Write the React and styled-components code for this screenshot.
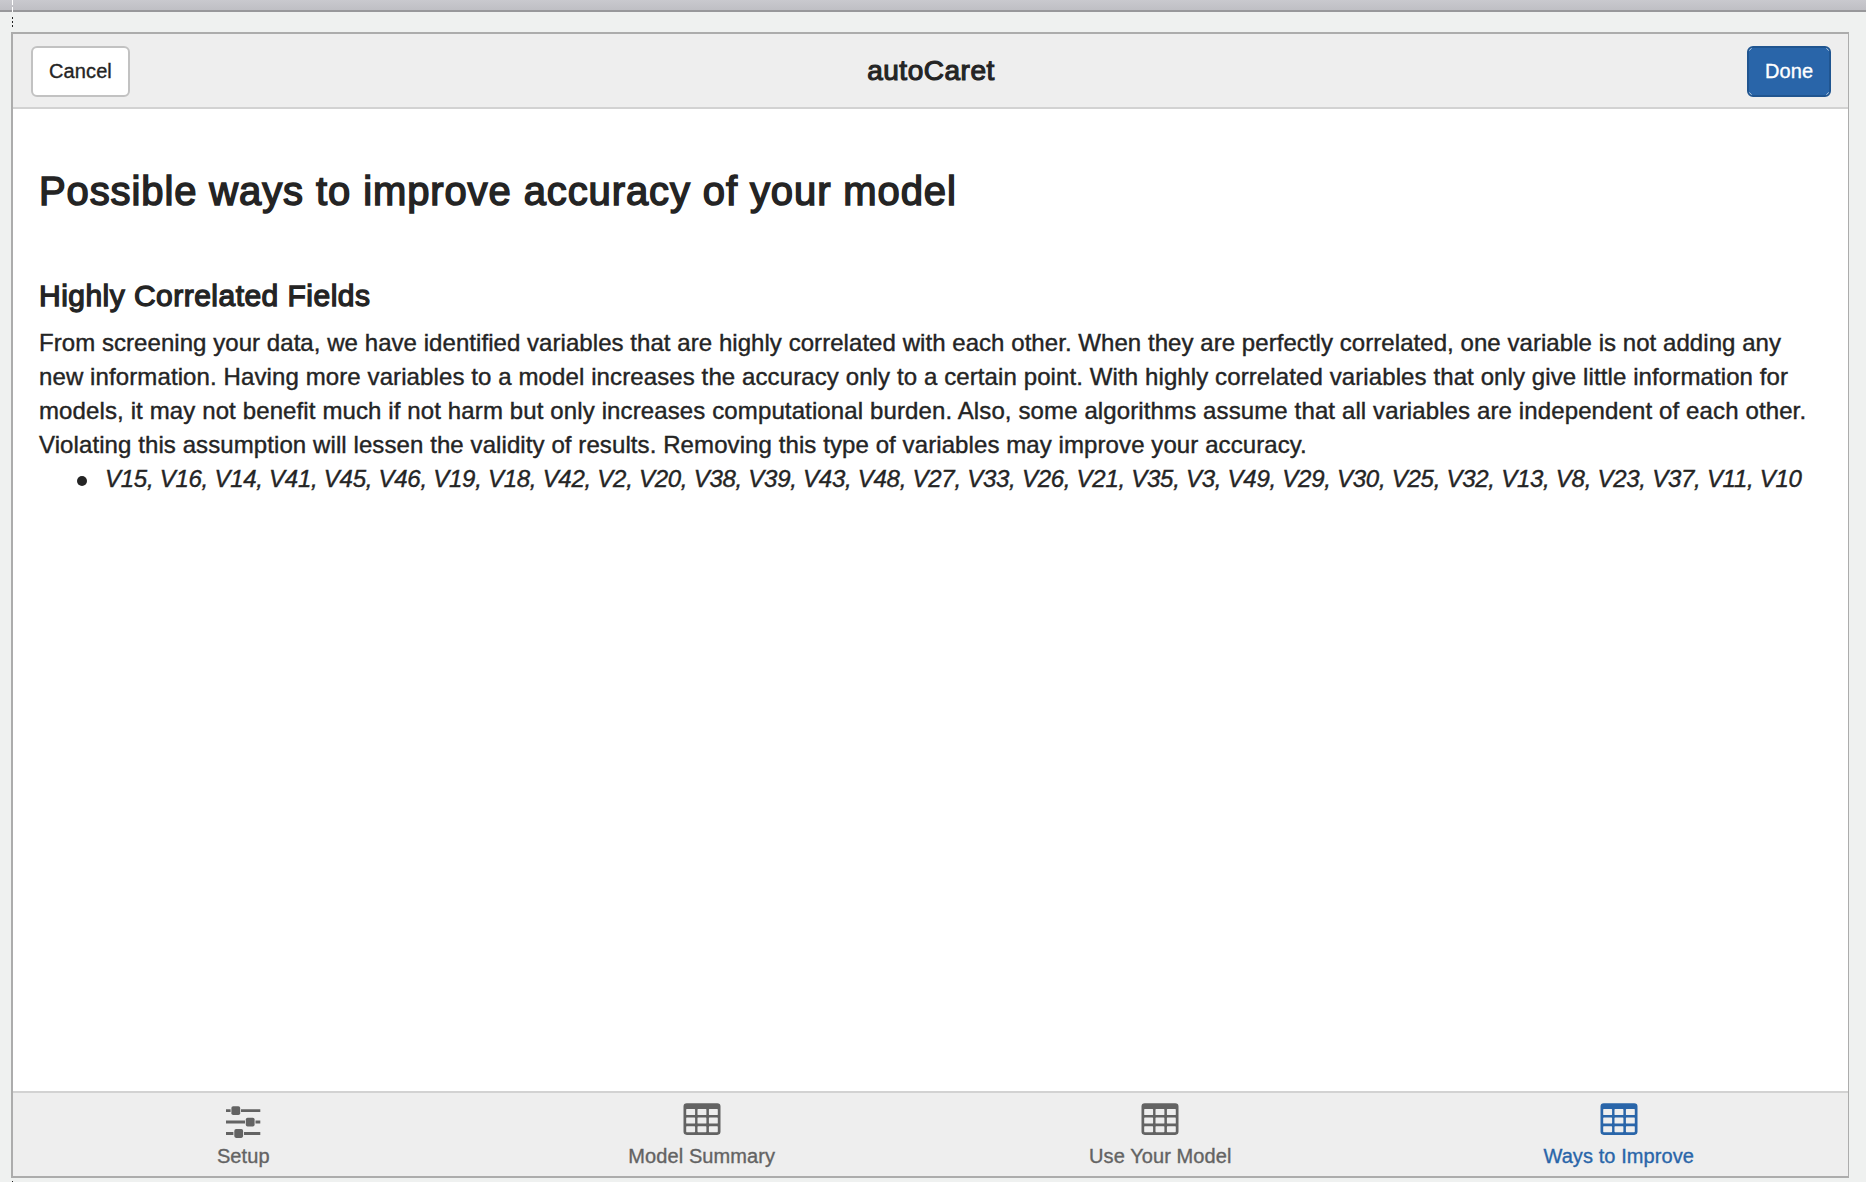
import React from "react";
import styled, { createGlobalStyle, css } from "styled-components";

const GlobalStyle = createGlobalStyle`
  * { box-sizing: border-box; }
  body {
    margin: 0;
    background: #eff1f0;
    color: #242424;
    font-family: "Liberation Sans", Arial, sans-serif;
  }
`;

const Page = styled.div`
  position: relative;
  display: flex;
  flex-direction: column;
  height: 1182px;
  overflow: hidden;
`;

const TitleStrip = styled.div`
  flex: none;
  height: 12px;
  background: linear-gradient(#c9c9ce, #bfbfc4);
  border-bottom: 2px solid #98989b;
`;

const Dashes = styled.i`
  position: absolute;
  left: 12px;
  top: ${(p) => p.$top}px;
  width: 1px;
  height: ${(p) => p.$height}px;
  background: repeating-linear-gradient(
    ${(p) => p.$color} 0 ${(p) => p.$dash}px,
    transparent ${(p) => p.$dash}px ${(p) => p.$period}px
  );
`;

const Window = styled.main`
  flex: none;
  display: flex;
  flex-direction: column;
  width: 1838px;
  height: 1146px;
  margin: 20px 0 0 11px;
  padding-left: 1px;
  background: #fff;
  border: 2px solid #acacac;
  border-right-width: 1px;
`;

const Header = styled.header`
  flex: none;
  display: grid;
  grid-template-columns: 1fr auto 1fr;
  align-items: center;
  height: 75px;
  margin-left: -1px;
  padding: 1px 17px 0 18px;
  background: #eee;
  border-bottom: 2px solid #d2d2d2;
`;

const Title = styled.h3`
  margin: 0 0 1px;
  font-size: 28px;
  line-height: 40px;
  font-weight: 400;
  letter-spacing: 0.52px;
  -webkit-text-stroke: 1.15px;
`;

const primaryButton = css`
  justify-self: end;
  width: 84px;
  color: #fff;
  border-color: #205590;
  background:
    linear-gradient(135deg, #9dbbdb 2.4px, transparent 2.8px),
    linear-gradient(225deg, #9dbbdb 2.4px, transparent 2.8px),
    linear-gradient(45deg, #9dbbdb 2.4px, transparent 2.8px),
    linear-gradient(315deg, #9dbbdb 2.4px, #2965a9 2.8px);
`;

const Button = styled.button`
  justify-self: start;
  width: 99px;
  height: 51px;
  padding: 0 0 1px;
  border: 2px solid #c2c2c2;
  border-radius: 6px;
  background: #fff;
  color: #242424;
  font: 400 20px/28px "Liberation Sans", Arial, sans-serif;
  letter-spacing: 0.1px;
  -webkit-text-stroke: 0.35px;
  ${(p) => p.$primary && primaryButton}
`;

const Content = styled.section`
  flex: 1;
  padding: 0 24px 0 25px;
`;

const Heading = styled.h1`
  margin: 60px 0 0;
  font-size: 40px;
  line-height: 44px;
  font-weight: 400;
  letter-spacing: 0.89px;
  -webkit-text-stroke: 1.5px;
`;

const Subheading = styled.h2`
  margin: 66px 0 0;
  font-size: 30px;
  line-height: 34px;
  font-weight: 400;
  letter-spacing: 0.47px;
  -webkit-text-stroke: 1.3px;
`;

const Paragraph = styled.p`
  margin: 13px 0 0;
`;

const Line = styled.span`
  display: block;
  font-size: 24px;
  line-height: 34px;
  white-space: nowrap;
  letter-spacing: ${(p) => p.$tracking}px;
  -webkit-text-stroke: 0.4px;
`;

const List = styled.ul`
  margin: 0;
  padding: 0 0 0 38px;
  list-style: none;
`;

const Item = styled.li`
  display: flex;
  align-items: center;
  gap: 18px;
  font-style: italic;

  &::before {
    content: "";
    width: 10px;
    height: 10px;
    margin-top: 4px;
    border-radius: 50%;
    background: #242424;
  }
`;

const TabBar = styled.nav`
  flex: none;
  display: grid;
  grid-template-columns: repeat(4, 1fr);
  height: 85px;
  margin-left: -1px;
  padding-left: 1px;
  background: #eee;
  border-top: 2px solid #d2d2d2;
`;

const Tab = styled.a`
  display: flex;
  flex-direction: column;
  align-items: center;
  padding-top: 10px;
  color: ${(p) => (p.$active ? "#2965a9" : "#636363")};
`;

const TabIcon = styled.svg`
  display: block;
  width: 38px;
  height: 38px;
  fill: currentColor;
`;

const TabLabel = styled.span`
  margin-top: 1px;
  font-size: 20px;
  line-height: 28px;
  letter-spacing: 0.09px;
  -webkit-text-stroke: 0.35px;
`;

const CELL_X = [3.2, 14.5, 25.9];
const CELL_Y = [6, 14.6, 23.2];
const cell = (x, y) =>
  `M${x + 0.6} ${y}h7.7q.6 0 .6.6v4.8q0 .6-.6.6h-7.7q-.6 0-.6-.6v-4.8q0-.6.6-.6Z`;
const tablePath =
  "M3.8.3h30.4a3.3 3.3 0 0 1 3.3 3.3v25a3.3 3.3 0 0 1-3.3 3.3H3.8a3.3 3.3 0 0 1-3.3-3.3v-25A3.3 3.3 0 0 1 3.8.3Z" +
  CELL_Y.map((y) => CELL_X.map((x) => cell(x, y)).join("")).join("");

function TableIcon() {
  return (
    <TabIcon viewBox="0 0 38 38">
      <path fillRule="evenodd" d={tablePath} />
    </TabIcon>
  );
}

function SlidersIcon() {
  return (
    <TabIcon viewBox="0 0 38 38">
      <path d="M2 6.200h4.600v2.900H2Z M17 6.200h19.300v2.900H17Z M2 17.600h19v2.900H2Z M31.500 17.600h4.800v2.900h-4.800Z M2 29h7.400v2.900H2Z M20 29h16.300v2.900H20Z" />
      <rect x="7.400" y="3.200" width="8.800" height="8.800" rx="1.800" />
      <rect x="21.800" y="14.700" width="8.800" height="8.800" rx="1.800" />
      <rect x="10.300" y="26.100" width="8.800" height="8.800" rx="1.800" />
    </TabIcon>
  );
}

const tabs = [
  { label: "Setup", Icon: SlidersIcon },
  { label: "Model Summary", Icon: TableIcon },
  { label: "Use Your Model", Icon: TableIcon },
  { label: "Ways to Improve", Icon: TableIcon, active: true },
];

const lines = [
  {
    tracking: 0.055,
    text: "From screening your data, we have identified variables that are highly correlated with each other. When they are perfectly correlated, one variable is not adding any",
  },
  {
    tracking: 0.105,
    text: "new information. Having more variables to a model increases the accuracy only to a certain point. With highly correlated variables that only give little information for",
  },
  {
    tracking: 0.12,
    text: "models, it may not benefit much if not harm but only increases computational burden. Also, some algorithms assume that all variables are independent of each other.",
  },
  {
    tracking: 0.09,
    text: "Violating this assumption will lessen the validity of results. Removing this type of variables may improve your accuracy.",
  },
];

const variables =
  "V15, V16, V14, V41, V45, V46, V19, V18, V42, V2, V20, V38, V39, V43, V48, V27, V33, V26, V21, V35, V3, V49, V29, V30, V25, V32, V13, V8, V23, V37, V11, V10";

export default function App() {
  return (
    <Page>
      <GlobalStyle />
      <TitleStrip />
      <Dashes $top={0} $height={12} $color="#fff" $dash={5} $period={7} />
      <Dashes $top={17} $height={11} $color="#222" $dash={2} $period={4} />
      <Window>
        <Header>
          <Button>Cancel</Button>
          <Title>autoCaret</Title>
          <Button $primary>Done</Button>
        </Header>
        <Content>
          <Heading>Possible ways to improve accuracy of your model</Heading>
          <Subheading>Highly Correlated Fields</Subheading>
          <Paragraph>
            {lines.map((line) => (
              <Line key={line.text} $tracking={line.tracking}>
                {line.text}
              </Line>
            ))}
          </Paragraph>
          <List>
            <Item>
              <Line $tracking={-0.267}>{variables}</Line>
            </Item>
          </List>
        </Content>
        <TabBar>
          {tabs.map(({ label, Icon, active }) => (
            <Tab key={label} $active={active}>
              <Icon />
              <TabLabel>{label}</TabLabel>
            </Tab>
          ))}
        </TabBar>
      </Window>
      <Dashes $top={1181} $height={1} $color="#222" $dash={1} $period={2} />
    </Page>
  );
}
